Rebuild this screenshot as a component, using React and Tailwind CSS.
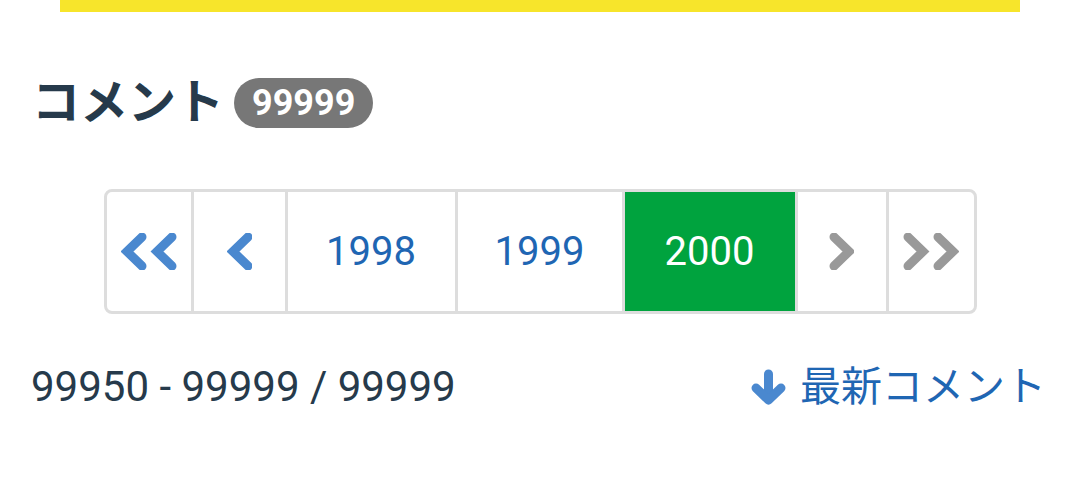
const font = { fontFamily: 'Roboto, "Noto Sans CJK JP", sans-serif' };

function Chevron({ double = false, right = false, className = '' }) {
  const one = right ? 'M4 4 L19 18.5 L4 33' : 'M20 4 L5 18.5 L20 33';
  return (
    <svg
      width={double ? 56 : 25}
      height={37}
      viewBox={double ? '-1 0 56 37' : '-1 0 25 37'}
      className={className}
      fill="none"
      stroke="currentColor"
      strokeWidth="9"
      strokeLinecap="round"
    >
      <path d={one} />
      {double && <path d={one} transform="translate(30 0)" />}
    </svg>
  );
}

function ArrowDown({ className = '' }) {
  return (
    <svg width="37" height="36" viewBox="0 0 37 36" className={className} fill="none" stroke="currentColor" strokeWidth="9" strokeLinecap="round" strokeLinejoin="round">
      <path d="M18.5 5 L18.5 29" />
      <path d="M6 19 L18.5 31 L31 19" />
    </svg>
  );
}

function PageCell({ children, className = '' }) {
  return (
    <li
      className={`-ml-[3px] first:ml-0 flex items-center justify-center border-[3px] border-[#dddddd] first:rounded-l-[8px] last:rounded-r-[8px] ${className}`}
    >
      {children}
    </li>
  );
}

export default function App() {
  return (
    <div className="w-[1080px] h-[496px] bg-white overflow-hidden" style={font}>
      <div className="mx-[60px] h-[12px] bg-[#f7e52b]" />

      {/* heading */}
      <div className="flex items-center pl-[32px] mt-[61px] h-[60px]">
        <h2 className="text-[48px] font-bold text-[#263a4b] leading-none">コメント</h2>
        <span className="ml-[10px] h-[50px] px-[18px] rounded-full bg-[#777777] text-white text-[36px] font-bold leading-[50px]">
          99999
        </span>
      </div>

      {/* pagination */}
      <ul className="flex justify-center mt-[56px] h-[125px]">
        <PageCell className="w-[90px] text-[#4a88cf]">
          <Chevron double />
        </PageCell>
        <PageCell className="w-[97px] text-[#4a88cf]">
          <Chevron />
        </PageCell>
        <PageCell className="w-[173px] text-[40px] text-[#1f66b3]">1998</PageCell>
        <PageCell className="w-[170px] text-[40px] text-[#1f66b3]">1999</PageCell>
        <PageCell className="w-[176px] relative z-10 bg-[#00a33e] border-[#00a33e] text-[40px] text-white">2000</PageCell>
        <PageCell className="w-[94px] text-[#999999]">
          <Chevron right />
        </PageCell>
        <PageCell className="w-[91px] text-[#999999]">
          <Chevron double right />
        </PageCell>
      </ul>

      {/* footer row */}
      <div className="flex items-center justify-between pl-[31px] pr-[34px] mt-[52px]">
        <span className="text-[42px] text-[#263a4b] leading-none">99950 - 99999 / 99999</span>
        <a className="flex items-center text-[#1f66b3] text-[41px] leading-none">
          <ArrowDown className="text-[#4a88cf] mr-[13px]" />
          最新コメント
        </a>
      </div>
    </div>
  );
}
